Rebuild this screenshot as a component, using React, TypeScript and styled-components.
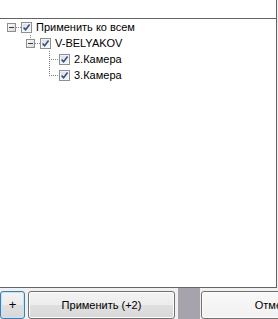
import styled, { createGlobalStyle } from "styled-components";

const GlobalStyle = createGlobalStyle`
    html, body {
        margin: 0;
        padding: 0;
        background: #f0f0f0;
    }
    body {
        font-family: Tahoma, "Liberation Sans", Arial, sans-serif;
        font-size: 11px;
        color: #000;
    }
`;

const Window = styled.div`
    width: 278px;
    height: 319px;
    overflow: hidden;
    display: flex;
    flex-direction: column;
    background: #f0f0f0;
`;

const Panel = styled.div`
    height: 290px;
    box-sizing: border-box;
    margin-right: 1px;
    background: #fff;
    border-right: 1px solid #646464;
    border-bottom: 1px solid #646464;
    display: flex;
    flex-direction: column;
`;

const Header = styled.div`
    height: 18px;
    flex: none;
    border-bottom: 1px solid #646464;
`;

const Tree = styled.div`
    padding: 0 0 0 2px;
    display: flex;
    flex-direction: column;
`;

const Row = styled.div`
    height: 16px;
    display: flex;
    align-items: center;
    white-space: nowrap;
`;

const Cell = styled.div`
    width: 19px;
    height: 16px;
    flex: none;
    svg {
        display: block;
    }
`;

const Check = styled.div`
    width: 11px;
    height: 11px;
    flex: none;
    margin-right: 4px;
    svg {
        display: block;
    }
`;

const Label = styled.span`
    line-height: 16px;
`;

const Footer = styled.div`
    flex: 1;
    display: flex;
    align-items: flex-start;
`;

const Button = styled.button<{ $w: number; $focused?: boolean; $light?: boolean; $big?: boolean }>`
    flex: none;
    width: ${p => p.$w}px;
    height: 28px;
    margin-top: 3px;
    padding: 1px 0 0;
    border-radius: 3px;
    border: 1px solid ${p => (p.$focused ? "#3c7fb1" : "#707070")};
    box-shadow: inset 0 0 0 1px ${p => (p.$focused ? "#c4e5f6" : "#fcfcfc")};
    background: ${p =>
        p.$light
            ? "linear-gradient(#f8f8f8, #f1f1f1)"
            : "linear-gradient(#f3f3f3 0%, #ececec 50%, #dfdfdf 52%, #d8d8d8 100%)"};
    font-family: Tahoma, "Liberation Sans", Arial, sans-serif;
    font-size: ${p => (p.$big ? 13 : 11)}px;
    color: #000;
    line-height: 24px;
    text-align: center;
    display: flex;
    justify-content: center;
    align-items: flex-start;
`;

const Gap = styled.div<{ $w: number }>`
    width: ${p => p.$w}px;
    flex: none;
`;

const DarkBlock = styled.div`
    width: 22px;
    height: 100%;
    flex: none;
    background: #a6a3ad;
`;

// dotted tree lines
const dot = "#808080";

function VLine({ from, to }: { from: number; to: number }) {
    const dots = [];
    for (let y = from; y < to; y += 2) dots.push(<rect key={"v" + y} x={9} y={y} width={1} height={1} fill={dot} />);
    return <>{dots}</>;
}

function HLine({ from, to }: { from: number; to: number }) {
    const dots = [];
    for (let x = from; x < to; x += 2) dots.push(<rect key={"h" + x} x={x} y={8} width={1} height={1} fill={dot} />);
    return <>{dots}</>;
}

function Expander({ top }: { top?: boolean }) {
    return (
        <svg width="19" height="16" viewBox="0 0 19 16">
            {top && <VLine from={0} to={4} />}
            <HLine from={14} to={19} />
            <defs>
                <linearGradient id="exg" x1="0" y1="0" x2="1" y2="1">
                    <stop offset="0" stopColor="#ffffff" />
                    <stop offset="1" stopColor="#d6d6d6" />
                </linearGradient>
            </defs>
            <rect x={5.5} y={4.5} width={8} height={8} fill="url(#exg)" stroke="#8e8f8f" />
            <rect x={7} y={8} width={5} height={1} fill="#3b3b3b" />
        </svg>
    );
}

function Branch({ last }: { last?: boolean }) {
    return (
        <svg width="19" height="16" viewBox="0 0 19 16">
            <VLine from={0} to={last ? 9 : 16} />
            <HLine from={11} to={19} />
        </svg>
    );
}

function CheckBox() {
    return (
        <svg width="11" height="11" viewBox="0 0 11 11">
            <defs>
                <linearGradient id="cbg" x1="0" y1="0" x2="1" y2="1">
                    <stop offset="0" stopColor="#dcdcdc" />
                    <stop offset="1" stopColor="#fbfbfb" />
                </linearGradient>
            </defs>
            <rect x={0.5} y={0.5} width={10} height={10} fill="#fff" stroke="#8e8f8f" />
            <rect x={1.5} y={1.5} width={8} height={8} fill="url(#cbg)" stroke="#f4f4f4" strokeWidth={0.5} />
            <path d="M2.6 5.4 L4.6 7.8 L8.6 2.4" fill="none" stroke="#2f5193" strokeWidth={1.6} />
        </svg>
    );
}

type Node = { label: string; level: number; kind: "root" | "expander" | "branch" | "last" };

const nodes: Node[] = [
    { label: "Применить ко всем", level: 0, kind: "root" },
    { label: "V-BELYAKOV", level: 1, kind: "expander" },
    { label: "2.Камера", level: 2, kind: "branch" },
    { label: "3.Камера", level: 2, kind: "last" },
];

export default function App() {
    return (
        <Window>
            <GlobalStyle />
            <Panel>
                <Header />
                <Tree>
                    {nodes.map(n => (
                        <Row key={n.label}>
                            {Array.from({ length: n.level }).map((_, i) => (
                                <Cell key={i} />
                            ))}
                            <Cell>
                                {n.kind === "root" && <Expander />}
                                {n.kind === "expander" && <Expander top />}
                                {n.kind === "branch" && <Branch />}
                                {n.kind === "last" && <Branch last />}
                            </Cell>
                            <Check>
                                <CheckBox />
                            </Check>
                            <Label>{n.label}</Label>
                        </Row>
                    ))}
                </Tree>
            </Panel>
            <Footer>
                <Button $w={25} $focused $big>+</Button>
                <Gap $w={3} />
                <Button $w={147}>Применить (+2)</Button>
                <Gap $w={3} />
                <DarkBlock />
                <Gap $w={1} />
                <Button $w={147} $light>Отмена</Button>
            </Footer>
        </Window>
    );
}
